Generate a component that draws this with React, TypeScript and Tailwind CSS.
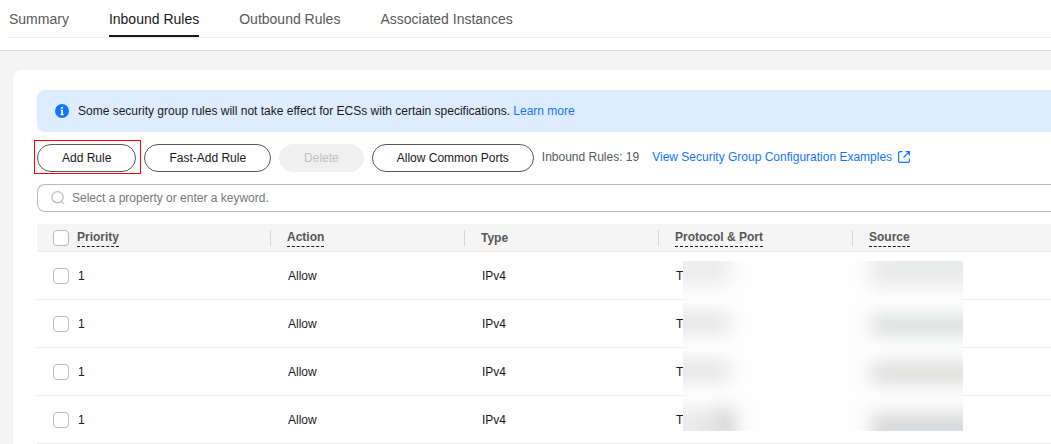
const tabs = ['Summary', 'Inbound Rules', 'Outbound Rules', 'Associated Instances'];

const rules = [
  { id: 1, priority: 1, action: 'Allow', type: 'IPv4', protocol: 'T' },
  { id: 2, priority: 1, action: 'Allow', type: 'IPv4', protocol: 'T' },
  { id: 3, priority: 1, action: 'Allow', type: 'IPv4', protocol: 'T' },
  { id: 4, priority: 1, action: 'Allow', type: 'IPv4', protocol: 'T' }
];

const columns = [
  { label: 'Priority', hint: true, width: 'w-[234px]' },
  { label: 'Action', hint: true, width: 'w-[194px]' },
  { label: 'Type', hint: false, width: 'w-[194px]' },
  { label: 'Protocol & Port', hint: true, width: 'w-[194px]' },
  { label: 'Source', hint: true, width: '' }
];

const cell = 'border-b border-[#ebebeb] p-0 pl-[17px]';

function Checkbox({ label }: { label: string }) {
  return (
    <input
      type="checkbox"
      aria-label={label}
      className="size-4 shrink-0 appearance-none rounded border border-[#bababa] bg-white checked:bg-[#1476ff]"
    />
  );
}

function PillButton({ children, disabled }: { children: string; disabled?: boolean }) {
  return (
    <button
      type="button"
      disabled={disabled}
      className="h-7 rounded-full border border-[#595959] bg-white px-6 text-[#191919] disabled:border-[#f0f0f0] disabled:bg-[#f0f0f0] disabled:text-[#c2c2c2]"
    >
      {children}
    </button>
  );
}

// Hides the port and address values of the listed rules
function Redaction() {
  return (
    <div className="absolute top-[37px] left-[646px] h-[170px] w-[280px] overflow-hidden bg-[#fefefe]">
      <div className="absolute -top-2 -left-4 h-8 w-[62px] bg-[#ebebeb] blur-[9px]" />
      <div className="absolute top-[52px] -left-4 h-5 w-[62px] bg-[#e2e2e2] blur-[9px]" />
      <div className="absolute top-[100px] -left-4 h-5 w-[62px] bg-[#e2e2e2] blur-[9px]" />
      <div className="absolute top-[148px] -left-4 h-8 w-[50px] bg-[#e9e7e7] blur-[9px]" />
      <div className="absolute top-[148px] left-8 h-8 w-5 bg-[#d2d1d1] blur-[9px]" />
      <div className="absolute -top-2 left-[188px] h-[34px] w-32 bg-[#e8e9e9] blur-[9px]" />
      <div className="absolute top-[54px] left-[188px] h-5 w-32 bg-[#dadcdc] blur-[9px]" />
      <div className="absolute top-[102px] left-[188px] h-5 w-32 bg-[#dadad9] blur-[9px]" />
      <div className="absolute top-[152px] left-[188px] h-8 w-32 bg-[#d8d9da] blur-[9px]" />
    </div>
  );
}

export default function App() {
  return (
    <div className="min-h-screen overflow-x-hidden bg-[#f4f4f4] font-['Liberation_Sans',Arial,sans-serif] text-xs text-[#191919]">
      <header className="h-[51px] border-b border-[#dbdbdb] bg-white pl-[9px]">
        <nav className="flex h-[38px] gap-10 border-b border-[#ebebeb] text-sm">
          {tabs.map((tab) => (
            <a
              key={tab}
              href="#"
              className={
                tab === 'Inbound Rules'
                  ? 'flex h-[37px] items-center border-b-2 border-[#191919] pt-0.5'
                  : 'flex h-[37px] items-center border-b-2 border-transparent pt-0.5 text-[#595959]'
              }
            >
              {tab}
            </a>
          ))}
        </nav>
      </header>

      <main className="mt-[19px] ml-[13px] rounded-tl-lg bg-white pt-5 pl-6">
        <div className="flex h-[42px] items-center rounded-l-lg bg-[#deecff] pl-[18px]">
          <svg className="mr-[9px] size-3.5" viewBox="0 0 14 14">
            <circle cx="7" cy="7" r="7" fill="#1476ff" />
            <path d="M6 3h2v1.6H6zM5.5 5.4H8v4.8h.8v1H5.3v-1h.9V6.4h-.7z" fill="#fff" />
          </svg>
          <p>
            Some security group rules will not take effect for ECSs with certain specifications.{' '}
            <a href="#" className="text-[#1476ff]">Learn more</a>
          </p>
        </div>

        <div className="mt-3 flex gap-2 whitespace-nowrap">
          <div className="relative flex">
            <PillButton>Add Rule</PillButton>
            <span className="pointer-events-none absolute -top-1 -right-[5px] -bottom-[2px] -left-[3px] border border-[#f00]" />
          </div>
          <PillButton>Fast-Add Rule</PillButton>
          <PillButton disabled>Delete</PillButton>
          <PillButton>Allow Common Ports</PillButton>
          <span className="leading-[26px] text-[#595959]">Inbound Rules: 19</span>
          <a href="#" className="ml-[5px] flex h-[26px] items-center gap-1.5 text-[#1476ff]">
            View Security Group Configuration Examples
            <svg className="size-3" viewBox="0 0 12 12" fill="none" stroke="currentColor" strokeWidth="1.2">
              <path d="M4.5.6H2A1.4 1.4 0 0 0 .6 2v8A1.4 1.4 0 0 0 2 11.4h8a1.4 1.4 0 0 0 1.4-1.4V7.5M7.5.6h3.9v3.9M11.4.6L5.5 6.5" />
            </svg>
          </a>
        </div>

        <div className="mt-3 flex h-7 items-center rounded-l-lg border border-r-0 border-[#bababa] pl-[13px]">
          <svg className="size-[14px]" viewBox="0 0 14 14" fill="none" stroke="#bababa" strokeWidth="1.2">
            <circle cx="6.5" cy="6.3" r="5.6" />
            <path d="M10.4 10.4l2.8 2.8" />
          </svg>
          <input
            type="text"
            aria-label="Search rules"
            placeholder="Select a property or enter a keyword."
            className="ml-[7px] flex-1 outline-none placeholder:text-[#777]"
          />
        </div>

        <div className="relative mt-3">
          <table className="w-full table-fixed border-separate border-spacing-0 text-left">
            <thead>
              <tr className="bg-[#f5f5f5] text-[#575757]">
                {columns.map((col, i) => (
                  <th key={col.label} className={`border-b border-[#ebebeb] p-0 pl-4 ${col.width}`}>
                    <div className="flex h-[27px] items-center gap-2">
                      {i === 0 && <Checkbox label="Select all rules" />}
                      <span className={col.hint ? 'border-b border-dashed border-[#191919] pb-px' : ''}>
                        {col.label}
                      </span>
                      {i < columns.length - 1 && <span className="ml-auto h-4 w-px bg-[#d6d6d6]" />}
                    </div>
                  </th>
                ))}
              </tr>
            </thead>
            <tbody>
              {rules.map((rule) => (
                <tr key={rule.id} className="h-12">
                  <td className="border-b border-[#ebebeb] p-0 pl-4">
                    <div className="flex items-center gap-[9px]">
                      <Checkbox label={`Select rule ${rule.id}`} />
                      {rule.priority}
                    </div>
                  </td>
                  <td className={cell}>{rule.action}</td>
                  <td className={cell}>{rule.type}</td>
                  <td className={cell}>{rule.protocol}</td>
                  <td className={cell}></td>
                </tr>
              ))}
            </tbody>
          </table>
          <Redaction />
        </div>
      </main>
    </div>
  );
}
